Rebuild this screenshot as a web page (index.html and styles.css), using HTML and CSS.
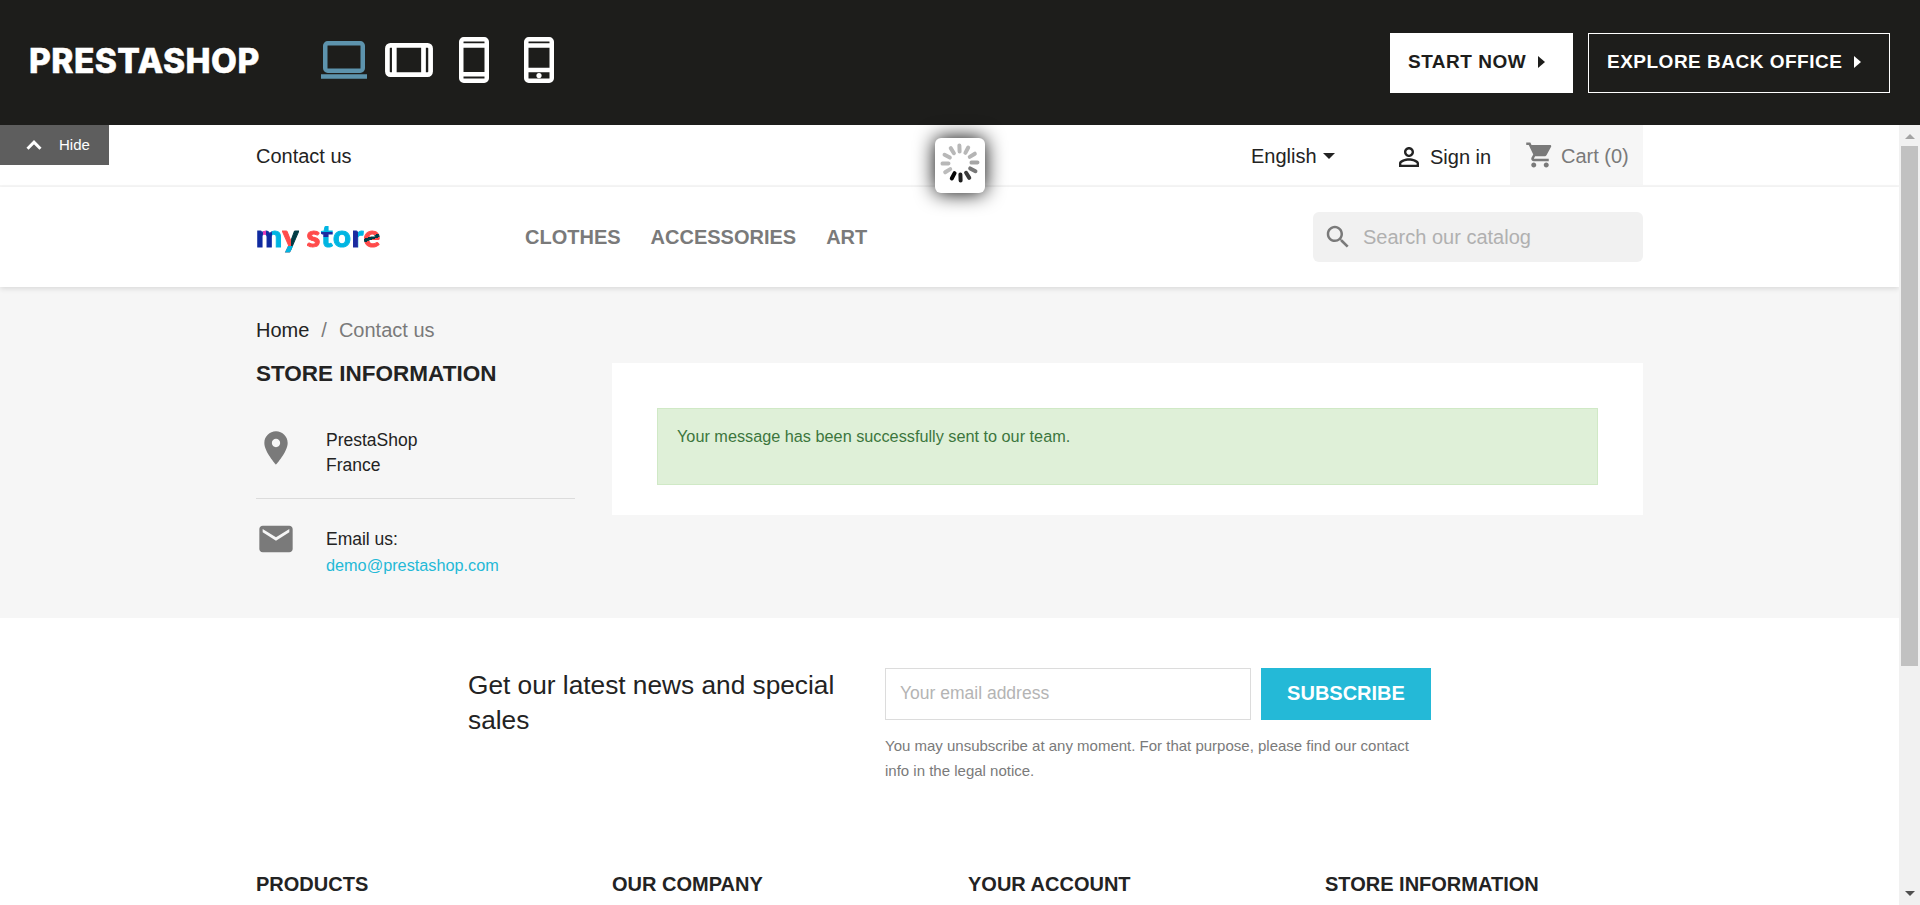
FILE: index.html
```html
<!DOCTYPE html>
<html lang="en">
<head>
<meta charset="utf-8">
<title>Contact us</title>
<link rel="stylesheet" href="styles.css">
</head>
<body>
<header class="demo-bar">
  <span class="demo-logo">PRESTASHOP</span>
  <div class="devices">
    <svg class="laptop" width="46" height="38" viewBox="0 0 46 38" fill="none" stroke="#5d93ad" stroke-width="4.500"><rect x="4.250" y="2.250" width="37.500" height="27.500" rx="2.500"/><path d="M0 35.500h46"/></svg>
    <svg class="tablet" width="48" height="34" viewBox="0 0 48 34" fill="none" stroke="#fff" stroke-width="4.700"><rect x="2.400" y="2.400" width="43.200" height="29.200" rx="3"/><path d="M9.300 3v28M38.500 3v28"/></svg>
    <svg class="phone" width="30" height="46" viewBox="0 0 30 46" fill="none" stroke="#fff" stroke-width="4.500"><rect x="2.250" y="2.250" width="25.500" height="41.500" rx="2.500"/><path d="M3 8.500h24M3 37.300h24"/></svg>
    <svg class="mobile" width="30" height="46" viewBox="0 0 30 46" fill="none" stroke="#fff" stroke-width="4.500"><rect x="2.250" y="2.250" width="25.500" height="41.500" rx="2.500"/><path d="M3 8.500h24M3 33h24"/><circle cx="15" cy="38.600" r="2.600" fill="#fff" stroke="none"/></svg>
  </div>
  <div class="demo-actions">
    <a class="demo-btn solid">START NOW <svg width="7" height="12" viewBox="0 0 7 12"><path d="M0 0l7 6-7 6z" fill="currentColor"/></svg></a>
    <a class="demo-btn outline">EXPLORE BACK OFFICE <svg width="7" height="12" viewBox="0 0 7 12"><path d="M0 0l7 6-7 6z" fill="currentColor"/></svg></a>
  </div>
</header>
<div class="frame">
  <div class="page">
    <div class="topnav">
      <div class="container topnav-row">
        <a>Contact us</a>
        <span class="lang">English<i class="caret"></i></span>
        <span class="signin"><svg width="30" height="30" viewBox="0 0 24 24" fill="#232323"><path d="M12 5.900c1.160 0 2.100.94 2.100 2.100s-.94 2.100-2.100 2.100S9.900 9.160 9.900 8s.94-2.100 2.100-2.100m0 9c2.970 0 6.100 1.460 6.100 2.100v1.100H5.900V17c0-.64 3.130-2.100 6.100-2.100M12 4C9.790 4 8 5.790 8 8s1.790 4 4 4 4-1.790 4-4-1.790-4-4-4zm0 9c-2.670 0-8 1.340-8 4v3h16v-3c0-2.660-5.330-4-8-4z"/></svg>Sign in</span>
        <span class="cart"><svg width="30" height="30" viewBox="0 0 24 24" fill="#7a7a7a"><path d="M7 18c-1.100 0-1.990.9-1.990 2S5.900 22 7 22s2-.9 2-2-.9-2-2-2zM1 2v2h2l3.600 7.590-1.350 2.450c-.16.280-.25.610-.25.960 0 1.100.9 2 2 2h12v-2H7.420c-.14 0-.25-.11-.25-.25l.03-.12.9-1.630h7.450c.75 0 1.410-.41 1.750-1.030l3.580-6.490c.08-.14.120-.31.120-.48 0-.55-.45-1-1-1H5.210l-.94-2H1zm16 16c-1.100 0-1.990.9-1.990 2s.89 2 1.990 2 2-.9 2-2-.9-2-2-2z"/></svg>Cart (0)</span>
      </div>
    </div>
    <div class="mainnav">
      <div class="container mainnav-row">
        <div class="store-logo"><span class="l-m">m</span><span class="l-y">y</span> <span class="l-s">s</span><span class="l-t">t</span><span class="l-o">o</span><span class="l-r">r</span><span class="l-e">e</span></div>
        <nav class="menu"><a>CLOTHES</a><a>ACCESSORIES</a><a>ART</a></nav>
        <div class="search"><svg width="30" height="30" viewBox="0 0 24 24" fill="#7a7a7a"><path d="M15.500 14h-.79l-.28-.27C15.410 12.590 16 11.110 16 9.500 16 5.910 13.090 3 9.500 3S3 5.910 3 9.500 5.910 16 9.500 16c1.610 0 3.090-.59 4.230-1.570l.27.280v.79l5 4.990L20.490 19l-4.990-5zm-6 0C7.010 14 5 11.990 5 9.500S7.010 5 9.500 5 14 7.010 14 9.500 11.990 14 9.500 14z"/></svg><span>Search our catalog</span></div>
      </div>
    </div>
    <main class="content">
      <div class="container">
        <div class="crumbs"><span>Home</span><i>/</i><em>Contact us</em></div>
        <div class="columns">
          <aside class="side">
            <h4>STORE INFORMATION</h4>
            <div class="info"><svg width="40" height="40" viewBox="0 0 24 24" fill="#7a7a7a"><path d="M12 2C8.130 2 5 5.130 5 9c0 5.250 7 13 7 13s7-7.750 7-13c0-3.870-3.130-7-7-7zm0 9.500c-1.380 0-2.500-1.120-2.500-2.500s1.120-2.500 2.500-2.500 2.500 1.120 2.500 2.500-1.120 2.500-2.500 2.500z"/></svg><div>PrestaShop<br>France</div></div>
            <hr>
            <div class="info mail"><svg width="40" height="40" viewBox="0 0 24 24" fill="#7a7a7a"><path d="M20 4H4c-1.100 0-1.990.9-1.990 2L2 18c0 1.100.9 2 2 2h16c1.100 0 2-.9 2-2V6c0-1.100-.9-2-2-2zm0 4l-8 5-8-5V6l8 5 8-5v2z"/></svg><div>Email us:<br><a>demo@prestashop.com</a></div></div>
          </aside>
          <section class="card"><div class="alert">Your message has been successfully sent to our team.</div></section>
        </div>
      </div>
    </main>
    <footer class="footer">
      <div class="newsletter">
        <p class="news-title">Get our latest news and special sales</p>
        <div class="news-form">
          <div class="news-row"><div class="news-input">Your email address</div><div class="news-btn">SUBSCRIBE</div></div>
          <p class="news-note">You may unsubscribe at any moment. For that purpose, please find our contact info in the legal notice.</p>
        </div>
      </div>
      <div class="container links"><h3>PRODUCTS</h3><h3>OUR COMPANY</h3><h3>YOUR ACCOUNT</h3><h3>STORE INFORMATION</h3></div>
    </footer>
  </div>
  <div class="scrollbar">
    <svg width="10" height="5" viewBox="0 0 10 5"><path d="M0 5l5-5 5 5z" fill="#a3a3a3"/></svg>
    <div class="thumb"></div>
    <svg class="down" width="10" height="5" viewBox="0 0 10 5"><path d="M0 0l5 5 5-5z" fill="#505050"/></svg>
  </div>
  <div class="hide-tab"><svg width="16" height="10" viewBox="0 0 16 10" fill="none" stroke="#fff" stroke-width="3"><path d="M1.500 8.700L8 2.200l6.500 6.500"/></svg>Hide</div>
  <div class="loader"><svg width="42" height="42" viewBox="-21 -21 42 42" stroke-width="4" stroke-linecap="round">
    <g transform="rotate(-2)">
    <path d="M0-11.500v-6" stroke="#b8b8b8"/>
    <path d="M0-11.500v-6" stroke="#b8b8b8" transform="rotate(30)"/>
    <path d="M0-11.500v-6" stroke="#b4b4b4" transform="rotate(60)"/>
    <path d="M0-11.500v-6" stroke="#a6a6a6" transform="rotate(90)"/>
    <path d="M0-11.500v-6" stroke="#787878" transform="rotate(120)"/>
    <path d="M0-11.500v-6" stroke="#3c3c3c" transform="rotate(150)"/>
    <path d="M0-11.500v-6" stroke="#1e1e1e" transform="rotate(180)"/>
    <path d="M0-11.500v-6" stroke="#050505" transform="rotate(210)"/>
    <path d="M0-11.500v-6" stroke="#bcbcbc" transform="rotate(240)"/>
    <path d="M0-11.500v-6" stroke="#b8b8b8" transform="rotate(270)"/>
    <path d="M0-11.500v-6" stroke="#b8b8b8" transform="rotate(300)"/>
    <path d="M0-11.500v-6" stroke="#b8b8b8" transform="rotate(330)"/>
    </g>
  </svg></div>
</div>
</body>
</html>
```
FILE: styles.css
```css
* { box-sizing: border-box; }
body { margin: 0; height: 905px; overflow: hidden; display: flex; flex-direction: column; font: 20px/24px "Liberation Sans", Arial, sans-serif; color: #232323; background: #fff; }
h3, h4, p { margin: 0; }
svg { display: block; flex: none; }

.demo-bar { height: 125px; flex: none; background: #1d1d1b; display: flex; padding: 0 30px 0 29px; }
.demo-logo { width: 292px; padding-top: 41px; font: 800 33.500px/41px Inter, sans-serif; letter-spacing: 0.450px; color: #fff; -webkit-text-stroke: 0.500px #fff; }
.devices { display: flex; align-items: flex-start; }
.laptop { margin-top: 41px; }
.tablet { margin: 43px 0 0 18px; }
.phone { margin: 37px 0 0 26px; }
.mobile { margin: 37px 0 0 35px; }
.demo-actions { margin-left: auto; padding-top: 33px; display: flex; gap: 15px; }
.demo-btn { height: 60px; padding: 0 17px 2px; border: 1px solid #fff; display: flex; align-items: center; gap: 12px; font-size: 19px; font-weight: 700; letter-spacing: 0.500px; color: #fff; white-space: nowrap; }
.solid { width: 183px; background: #fff; color: #1d1d1b; }
.outline { width: 302px; padding-left: 18px; }

.frame { flex: 1; min-height: 0; display: flex; position: relative; }
.page { width: 1899px; height: 780px; overflow: hidden; }
.container { width: 1387px; margin: 0 auto; }
.topnav { height: 62px; border-bottom: 2px solid #f6f6f6; }
.topnav-row { display: flex; height: 62px; line-height: 62px; }
.lang { margin-left: auto; width: 143px; display: flex; align-items: center; gap: 6px; }
.caret { border: 6.500px solid transparent; border-top: 6.500px solid #232323; border-bottom: 0; }
.signin { width: 116px; padding-top: 1px; display: flex; align-items: center; gap: 6px; }
.cart { width: 133px; padding-left: 15px; background: #f6f6f6; color: #7a7a7a; display: flex; align-items: center; gap: 6px; }
.cart svg { margin-bottom: 3px; }

.mainnav { height: 100px; background: #fff; position: relative; box-shadow: 0 2px 5px rgba(0,0,0,.11); }
.mainnav-row { display: flex; height: 100px; align-items: center; }
.store-logo { width: 269px; padding-bottom: 5px; font: 900 31px/38px Lato, sans-serif; letter-spacing: 0.600px; white-space: pre; }
.store-logo span { color: transparent; background-clip: text; -webkit-background-clip: text; -webkit-text-stroke: 1px transparent; }
.l-m { background-image: linear-gradient(90deg, #0f2aa0 28%, #e03bb5 28% 40%, #0f2aa0 40% 62%, #00b5e2 62%); }
.l-y { background-image: linear-gradient(180deg, transparent 79%, #00b5e2 79%), linear-gradient(90deg, #ff4b4b 55%, #003b45 55%); }
.l-s { background-image: linear-gradient(#ff4b4b, #ff4b4b); }
.l-t { background-image: linear-gradient(180deg, #00b5e2 42%, #1b2ba0 42% 54%, #00b5e2 54%); }
.l-o { background-image: linear-gradient(#00b5e2, #00b5e2); }
.l-r { background-image: linear-gradient(90deg, #1b2ba0 50%, #00b5e2 50%); }
.l-e { background-image: linear-gradient(160deg, #ff4b4b 52%, #003b45 52% 60%, #ff4b4b 60%); }
.menu { display: flex; gap: 30px; font-weight: 700; color: #7a7a7a; }
.search { margin-left: auto; width: 330px; height: 50px; border-radius: 6px; background: #f1f1f1; color: #b0b0b0; display: flex; align-items: center; padding-left: 10px; gap: 10px; }

.content { height: 331px; background: #f6f6f6; padding-top: 31px; }
.crumbs { display: flex; height: 24px; }
.crumbs i, .crumbs em { font-style: normal; color: #7a7a7a; }
.crumbs i { margin: 0 12px; }
.columns { display: flex; justify-content: space-between; padding-top: 21px; align-items: flex-start; }
.side { width: 319px; font-size: 17.500px; line-height: 25px; }
.side h4 { font-size: 22.500px; line-height: 22px; height: 24px; white-space: nowrap; }
.info { display: flex; gap: 30px; padding-top: 41px; }
.side hr { margin: 20px 0 0; border: 0; height: 1px; background: #dcdcdc; }
.side .mail { padding-top: 20px; }
.mail > div { padding-top: 7px; line-height: 26px; }
.mail a { font-size: 16.250px; color: #24b9d7; }
.card { width: 1031px; height: 152px; background: #fff; padding: 45px; }
.alert { height: 77px; border: 1px solid #d0e9c6; background: #dff0d8; color: #3c763d; font-size: 16.250px; padding: 15px 19px; }

.newsletter { display: flex; padding: 50px 468px 0; }
.news-title { width: 417px; padding-right: 20px; font-size: 26.250px; line-height: 35px; }
.news-form { width: 546px; }
.news-row { display: flex; gap: 10px; }
.news-input { width: 366px; height: 52px; border: 1px solid #dcdcdc; padding-left: 14px; font-size: 17.500px; line-height: 49px; color: #b4b4b4; }
.news-btn { width: 170px; height: 52px; background: #24b9d7; color: #fff; font-weight: 700; line-height: 50px; text-align: center; }
.news-note { padding-top: 13px; font-size: 15px; line-height: 25px; color: #7a7a7a; }
.links { display: grid; grid-template-columns: 356px 356px 357px 1fr; padding-top: 89px; }
.links h3 { font-size: 20px; line-height: 24px; white-space: nowrap; }

.scrollbar { width: 21px; background: #f1f1f1; display: flex; flex-direction: column; align-items: center; padding: 9px 0; }
.thumb { width: 17px; height: 520px; margin-top: 7px; background: #c1c1c1; }
.down { margin-top: auto; }
.hide-tab { position: absolute; left: 0; top: 0; width: 109px; height: 40px; background: #5e5e5e; color: #fff; display: flex; align-items: center; padding-left: 26px; gap: 17px; font-size: 15px; }
.loader { position: absolute; left: 935px; top: 13px; width: 50px; height: 55px; border-radius: 6px; background: #fff; box-shadow: 0 0 20px #000; padding: 4px; }
```
